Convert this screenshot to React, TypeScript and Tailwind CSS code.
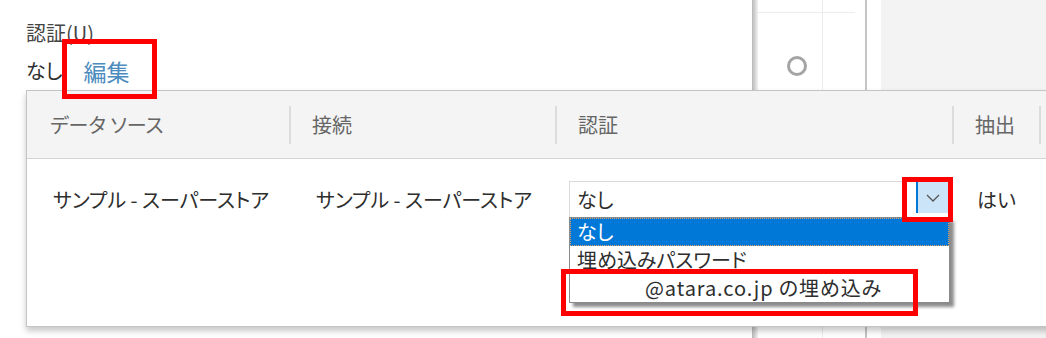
const FONT = "font-['Noto_Sans_CJK_JP','Noto_Sans',sans-serif] [font-feature-settings:'palt']";

function Chevron() {
  return (
    <svg width="14" height="8" viewBox="0 0 14 8" fill="none">
      <path d="M1 1l6 6 6-6" stroke="#555" strokeWidth="1.3" />
    </svg>
  );
}

function Column({ label, width, first }: { label: string; width: string; first?: boolean }) {
  return (
    <div className={`flex items-center h-full ${width}`}>
      {!first && <div className="w-[2px] h-[38px] bg-[#dcdcdc]" />}
      <span className={first ? "pl-[23px]" : "pl-[21px]"}>{label}</span>
    </div>
  );
}

export default function App() {
  return (
    <div className={`relative w-[1046px] h-[338px] overflow-hidden bg-white text-[20px] text-[#2e2e2e] ${FONT}`}>
      {/* background page */}
      <div className="flex h-full">
        <div className="w-[752px] pl-[26px] pt-[20px]">
          <div className="leading-[26px] text-[#444]">認証(U)</div>
          <div className="flex items-center gap-[21px] mt-[12px] leading-[26px]">
            <span>なし</span>
            <span className="text-[23px] text-[#4b8bbe]">編集</span>
          </div>
        </div>
        <div className="flex w-[115px] h-full">
          <div className="w-[6px] h-full bg-gradient-to-r from-[#b8b8b8] to-[#f2f2f2]" />
          <div className="flex-1 border-r-2 border-[#c4c4c4] grid grid-cols-[64px_1fr] grid-rows-[13px_1fr]">
            <div className="border-b border-[#ececec]" />
            <div className="border-b border-l border-[#ececec] mr-[10px]" />
            <div className="pl-[28px] pt-[42px]">
              <svg width="22" height="22" viewBox="0 0 22 22">
                <circle cx="11" cy="11" r="8.5" fill="none" stroke="#a4a4a4" strokeWidth="3" />
              </svg>
            </div>
            <div className="border-l border-[#ececec]" />
          </div>
        </div>
        <div className="w-[14px]" />
        <div className="flex-1 bg-[#f3f3f3]" />
      </div>

      {/* popup panel */}
      <div className="absolute left-[26px] top-[90px] w-[1040px] h-[237px] border border-[#c4c4c4] bg-white shadow-[0_4px_6px_rgba(0,0,0,0.22)]">
        <div className="flex h-[68px] bg-[#f4f4f4] border-b border-[#d4d4d4] text-[#666]">
          <Column label="データ ソース" width="w-[262px]" first />
          <Column label="接続" width="w-[266px]" />
          <Column label="認証" width="w-[397px]" />
          <Column label="抽出" width="w-[87px]" />
          <div className="flex items-center h-full">
            <div className="w-[2px] h-[38px] bg-[#dcdcdc]" />
          </div>
        </div>
        <div className="flex pt-[22px]">
          <div className="w-[262px] pl-[26px] h-[37px] flex items-center">サンプル - スーパーストア</div>
          <div className="w-[266px] pl-[27px] h-[37px] flex items-center">サンプル - スーパーストア</div>
          <div className="w-[397px] pl-[14px]">
            <div className="relative w-[381px] h-[37px] border border-[#dadada] bg-white flex">
              <span className="flex-1 pl-[7px] flex items-center">なし</span>
              <div className="w-[32px] mr-[1px] h-[31px] border-l-2 border-[#0078d7] bg-[#cce4f7] flex items-center justify-center">
                <Chevron />
              </div>
              <div className="absolute left-[-1px] top-[35px] w-[381px] border border-[#8a8a8a] bg-white shadow-[4px_4px_3px_rgba(0,0,0,0.45)]">
                <div className="h-[28px] leading-[28px] pl-[7px] bg-[#0078d7] text-white outline-1 outline-dotted outline-[#e8a060] -outline-offset-1">なし</div>
                <div className="h-[28px] leading-[28px] pl-[7px]">埋め込みパスワード</div>
                <div className="h-[28px] leading-[28px] pl-[75px] tracking-[0.9px]">@atara.co.jp の埋め込み</div>
              </div>
            </div>
          </div>
          <div className="w-[87px] pl-[25px] h-[37px] flex items-center">はい</div>
        </div>
      </div>

      {/* annotation boxes */}
      <div className="absolute left-[62px] top-[39px] w-[95px] h-[60px] border-[5px] border-[#ff0000]" />
      <div className="absolute left-[902px] top-[177px] w-[51px] h-[45px] border-[5px] border-[#ff0000]" />
      <div className="absolute left-[561px] top-[269px] w-[357px] h-[47px] border-[5px] border-[#ff0000]" />
    </div>
  );
}
